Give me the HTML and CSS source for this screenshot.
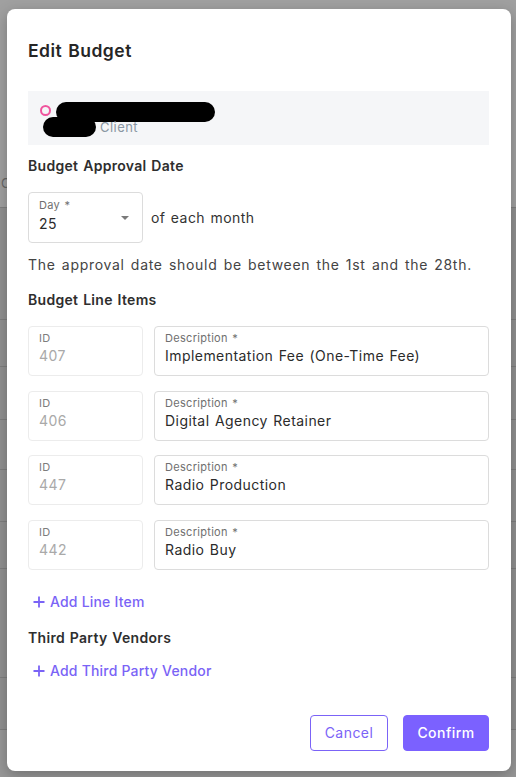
FILE: index.html
```html
<!DOCTYPE html>
<html>
<head>
<meta charset="utf-8">
<link rel="stylesheet" href="styles.css">
</head>
<body>
<div class="page">
  <div class="page-top"><span class="page-letter">C</span></div>
  <div class="page-row r1"></div>
  <div class="page-row r2"></div>
  <div class="page-row r3"></div>
  <div class="page-row r4"></div>
  <div class="page-row r5"></div>
  <div class="page-row r6"></div>
  <div class="page-row r7"></div>
  <div class="page-row r8"></div>
</div>

<div class="modal">
  <h1 class="title">Edit Budget</h1>

  <div class="client-card">
    <div class="client-row">
      <span class="status-dot"></span>
      <span class="redact redact-name"></span>
    </div>
    <div class="client-row sub">
      <span class="redact redact-short"></span>
      <span class="client-label">Client</span>
    </div>
  </div>

  <h2 class="section section-first">Budget Approval Date</h2>
  <div class="day-row">
    <div class="field select">
      <span class="field-label">Day *</span>
      <span class="field-value">25</span>
      <span class="caret"></span>
    </div>
    <span class="day-text">of each month</span>
  </div>
  <p class="helper">The approval date should be between the 1st and the 28th.</p>

  <h2 class="section section-items">Budget Line Items</h2>
  <div class="items">
    <div class="item">
      <div class="field id-field"><span class="field-label">ID</span><span class="field-value muted">407</span></div>
      <div class="field desc-field"><span class="field-label">Description *</span><span class="field-value">Implementation Fee (One-Time Fee)</span></div>
    </div>
    <div class="item">
      <div class="field id-field"><span class="field-label">ID</span><span class="field-value muted">406</span></div>
      <div class="field desc-field"><span class="field-label">Description *</span><span class="field-value">Digital Agency Retainer</span></div>
    </div>
    <div class="item">
      <div class="field id-field"><span class="field-label">ID</span><span class="field-value muted">447</span></div>
      <div class="field desc-field"><span class="field-label">Description *</span><span class="field-value">Radio Production</span></div>
    </div>
    <div class="item">
      <div class="field id-field"><span class="field-label">ID</span><span class="field-value muted">442</span></div>
      <div class="field desc-field"><span class="field-label">Description *</span><span class="field-value">Radio Buy</span></div>
    </div>
  </div>

  <button class="add-link add-item">
    <svg class="plus" width="12" height="12" viewBox="0 0 12 12"><path d="M6 0.5V11.5M0.5 6H11.5" stroke="currentColor" stroke-width="1.8" fill="none"/></svg>
    <span>Add Line Item</span>
  </button>

  <h2 class="section section-vendors">Third Party Vendors</h2>

  <button class="add-link add-vendor">
    <svg class="plus" width="12" height="12" viewBox="0 0 12 12"><path d="M6 0.5V11.5M0.5 6H11.5" stroke="currentColor" stroke-width="1.8" fill="none"/></svg>
    <span>Add Third Party Vendor</span>
  </button>

  <div class="actions">
    <button class="btn btn-outline">Cancel</button>
    <button class="btn btn-primary">Confirm</button>
  </div>
</div>
</body>
</html>
```

FILE: styles.css
```css
* { box-sizing: border-box; }

html, body {
  margin: 0;
  padding: 0;
  width: 516px;
  height: 777px;
  overflow: hidden;
}

body {
  position: relative;
  background: #979797;
  font-family: Inter, "Noto Sans", "Liberation Sans", sans-serif;
  letter-spacing: 0.45px;
  word-spacing: 1px;
  color: #2b2b2b;
}

/* underlying page (dimmed) */
.page {
  display: flex;
  flex-direction: column;
  width: 516px;
  height: 777px;
}
.page-top {
  height: 208px;
  background: #a0a0a0;
  border-bottom: 1px solid #7f7f7f;
  position: relative;
}
.page-letter {
  position: absolute;
  left: 1px;
  top: 175px;
  font-size: 13px;
  color: #666;
}
.page-row {
  background: #909090;
  border-bottom: 1px solid #7e7e7e;
}
.r1 { height: 112px; }
.r2 { height: 47px; }
.r3 { height: 53px; }
.r4 { height: 50px; }
.r5 { height: 52px; }
.r6 { height: 47px; }
.r7 { height: 109px; }
.r8 { height: 52px; }

/* modal */
.modal {
  position: absolute;
  left: 7px;
  top: 9px;
  width: 504px;
  height: 762px;
  background: #fff;
  border-radius: 8px;
  box-shadow: 0 4px 14px rgba(0, 0, 0, 0.25);
  padding: 30px 22px 20px 21px;
  display: flex;
  flex-direction: column;
}

.title {
  margin: 0;
  font-size: 17.5px;
  line-height: 24px;
  font-weight: 600;
  letter-spacing: 0.5px;
  color: #262626;
}

.client-card {
  margin-top: 28px;
  height: 54px;
  background: #f5f6f8;
  padding-top: 11px;
}
.client-row {
  display: flex;
  align-items: center;
  height: 20px;
}
.client-row.sub {
  margin-top: -5px;
}
.status-dot {
  width: 11px;
  height: 11px;
  margin-left: 12px;
  margin-top: -3px;
  border: 2px solid #f0559e;
  border-radius: 50%;
}
.redact {
  display: block;
  height: 20px;
  background: #000;
  border-radius: 10px;
}
.redact-name {
  margin-left: 5px;
  width: 159px;
}
.redact-short {
  margin-left: 15px;
  width: 53px;
}
.client-label {
  margin-left: 4px;
  font-size: 13px;
  line-height: 20px;
  color: #8a96a3;
}

.section {
  margin: 0;
  font-size: 14px;
  line-height: 20px;
  font-weight: 600;
  letter-spacing: 0.3px;
  color: #2e2e2e;
}
.section-first { margin-top: 11px; }
.section-items { margin-top: 15px; }
.section-vendors { margin-top: 16px; }

.day-row {
  margin-top: 16px;
  display: flex;
  align-items: center;
}
.field {
  position: relative;
  height: 50px;
  border: 1px solid #dcdcdc;
  border-radius: 4px;
  padding: 4px 10px 0 10px;
  display: flex;
  flex-direction: column;
}
.select {
  width: 115px;
  height: 51px;
  padding-top: 5px;
}
.field-label {
  font-size: 11px;
  line-height: 14px;
  letter-spacing: 0.3px;
  color: #6f6f6f;
}
.field-value {
  margin-top: 1px;
  font-size: 14px;
  line-height: 20px;
  color: #2b2b2b;
}
.select .field-value { margin-top: 2px; }
.field-value.muted { color: #a9a9a9; }
.caret {
  position: absolute;
  right: 13px;
  top: 23px;
  width: 0;
  height: 0;
  border-left: 4px solid transparent;
  border-right: 4px solid transparent;
  border-top: 4px solid #7a7a7a;
}
.day-text {
  margin-left: 8px;
  font-size: 14px;
  line-height: 20px;
  color: #333;
}

.helper {
  margin: 12px 0 0 0;
  font-size: 14px;
  line-height: 20px;
  letter-spacing: 0.7px;
  word-spacing: 1.6px;
  color: #444;
}

.items {
  margin-top: 16px;
  display: flex;
  flex-direction: column;
  gap: 14.5px;
}
.item {
  display: flex;
  gap: 11px;
}
.id-field {
  width: 115px;
  border-color: #ececec;
}
.id-field .field-label { color: #7d7d7d; }
.desc-field {
  flex: 1;
}

.add-link {
  align-self: flex-start;
  display: flex;
  align-items: center;
  gap: 5px;
  margin: 0;
  padding: 0 0 0 5px;
  border: 0;
  background: none;
  font-family: inherit;
  font-size: 14px;
  line-height: 20px;
  font-weight: 500;
  letter-spacing: 0.2px;
  word-spacing: 0;
  color: #7a63f6;
}
.add-item { margin-top: 22px; }
.add-vendor { margin-top: 13px; }

.actions {
  margin-top: 34px;
  display: flex;
  justify-content: flex-end;
  gap: 15px;
}
.btn {
  height: 36px;
  border-radius: 4px;
  font-family: inherit;
  font-size: 14px;
  line-height: 20px;
  letter-spacing: 0.45px;
  padding: 0;
}
.btn-outline {
  width: 78px;
  background: #fff;
  border: 1px solid #7b63f7;
  color: #7b63f7;
}
.btn-primary {
  width: 86px;
  background: #7b61ff;
  border: 1px solid #7b61ff;
  color: #fff;
  font-weight: 500;
}
```
